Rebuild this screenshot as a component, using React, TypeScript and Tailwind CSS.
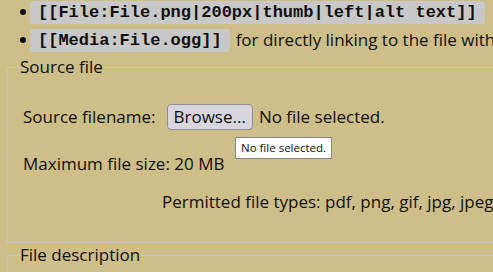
import React from "react";

const sans = { fontFamily: "'Open Sans', 'Noto Sans', sans-serif" };

export default function App() {
  return (
    <div
      className="w-[493px] h-[272px] overflow-hidden bg-[#cdbe8a] text-[#111] relative"
      style={sans}
    >
      <ul className="pl-[30px] mt-[-2px] text-[17px]">
        <li className="h-[28px] flex items-center relative">
          <span className="absolute left-[-10px] top-[11px] w-[6px] h-[6px] rounded-full bg-[#111]" />
          <code className="bg-[#c8c8c8] rounded-[3px] px-[8px] py-[1px] font-bold text-[17px] leading-[21px] whitespace-nowrap font-['Liberation_Mono',monospace]">
            [[File:File.png|200px|thumb|left|alt text]]
          </code>
        </li>
        <li className="h-[28px] flex items-center relative">
          <span className="absolute left-[-10px] top-[11px] w-[6px] h-[6px] rounded-full bg-[#111]" />
          <code className="bg-[#c8c8c8] rounded-[3px] px-[8px] py-[1px] font-bold text-[17px] leading-[21px] whitespace-nowrap font-['Liberation_Mono',monospace]">
            [[Media:File.ogg]]
          </code>
          <span className="ml-[6px] whitespace-nowrap">for directly linking to the file without displaying it</span>
        </li>
      </ul>

      <fieldset className="ml-[7px] mr-[-20px] mt-[3px] border border-[#c4c4c0] px-[12px] h-[186px]">
        <legend className="text-[17px] leading-[20px]">Source file</legend>
        <div className="pl-[3px] pt-[27px] text-[17px]">
          <div className="flex items-center h-[26px] relative">
            <span>Source filename:</span>
            <button className="ml-[11px] h-[26px] px-[6px] bg-[#d6d6dc] border border-[#8e8e94] rounded-[4px] text-[17px] leading-[22px]">
              Browse...
            </button>
            <span className="ml-[6px]">No file selected.</span>
            <div className="absolute left-[212px] top-[33px] bg-white border border-[#8a8a8a] px-[5px] h-[22px] flex items-center text-[11.5px] whitespace-nowrap">
              No file selected.
            </div>
          </div>
          <div className="mt-[21px] h-[26px] flex items-center">Maximum file size: 20 MB</div>
          <div className="mt-[12px] h-[26px] flex items-center pl-[139px] whitespace-nowrap">
            Permitted file types: pdf, png, gif, jpg, jpeg, webp, svg, ogg, webm
          </div>
        </div>
      </fieldset>

      <fieldset className="ml-[7px] mr-[-20px] mt-[2px] border border-[#c4c4c0] px-[12px] h-[60px]">
        <legend className="text-[17px] leading-[20px]">File description</legend>
      </fieldset>
    </div>
  );
}
